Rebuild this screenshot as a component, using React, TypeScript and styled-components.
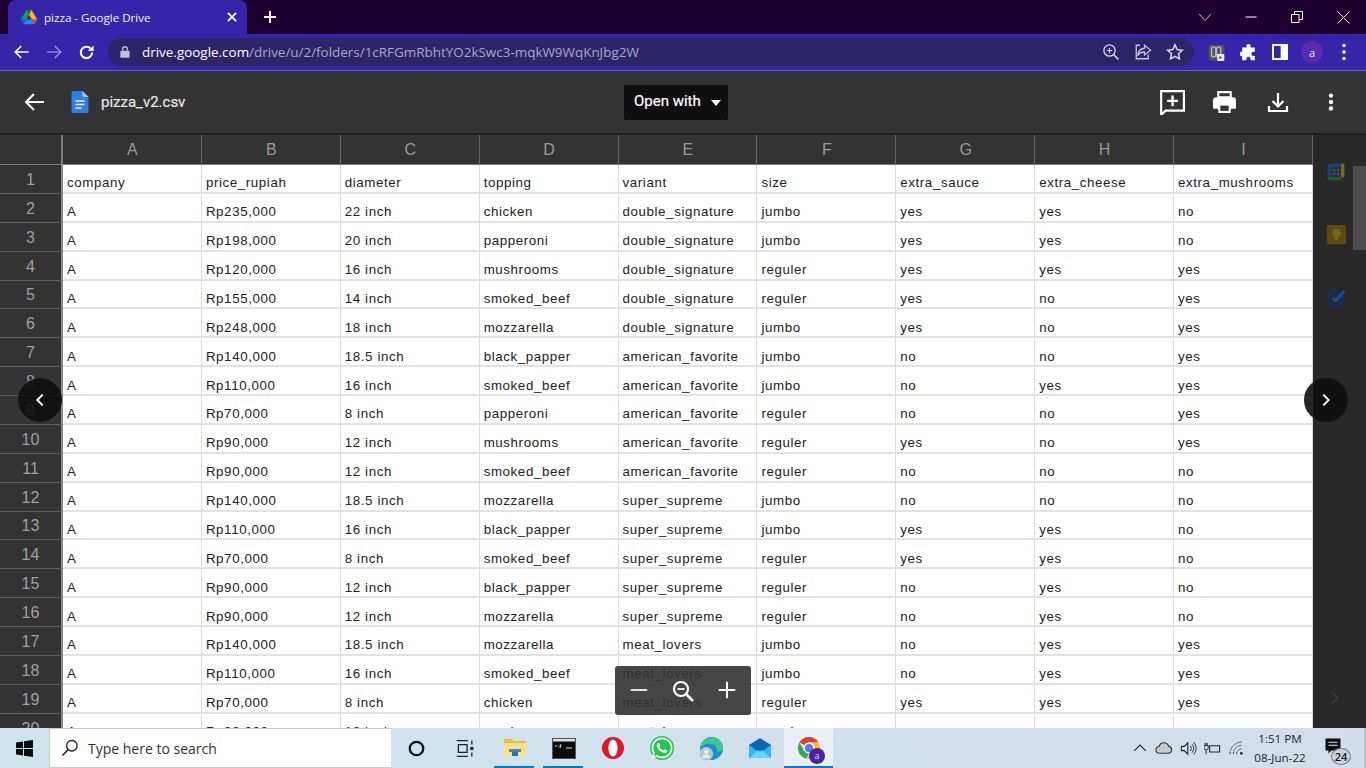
import React from "react";
import styled, { createGlobalStyle } from "styled-components";
import { FaWhatsapp } from "react-icons/fa";

const Global = createGlobalStyle`
  html, body { margin: 0; padding: 0; height: 100%; overflow: hidden; background: #333; }
  * { box-sizing: border-box; }
`;

const Page = styled.div`
  width: 1366px; height: 768px; display: flex; flex-direction: column; overflow: hidden;
  font-family: "Liberation Sans", Arial, sans-serif;
`;
const TabStrip = styled.div`
  height: 34px; flex: none; background: #1f0033; display: flex; align-items: stretch; padding-left: 8px;
`;
const Tab = styled.div`
  width: 239px; background: #3725a9; border-radius: 8px 8px 0 0; display: flex; align-items: center;
  padding: 0 8px 0 13px; color: #f4f2ff; font: 11.6px "Open Sans", sans-serif; 
`;
const TabTitle = styled.span` margin-left: 7px; flex: 1; letter-spacing: 0; `;
const IconBox = styled.span<{ $w: number }>`
  width: ${p => p.$w}px; flex: none; height: 100%; display: flex; align-items: center; justify-content: center; position: relative;
`;
const Spacer = styled.div` flex: 1; `;
const Toolbar = styled.div`
  height: 36px; flex: none; background: #3725a9; display: flex; align-items: center; padding: 0 6px;
`;
const NavSlot = styled.span` width: 32px; height: 32px; display: flex; align-items: center; justify-content: center; position: relative; `;
const Omnibox = styled.div`
  flex: 1; height: 28px; margin: 0 6px; background: #2d2568; border-radius: 14px; display: flex; align-items: center;
  padding: 0 3px 0 10px;
`;
const UrlText = styled.div`
  flex: 1; margin-left: 10px; font: 13.44px "Open Sans", sans-serif; color: #a9a5cc; white-space: nowrap;
`;
const UrlHost = styled.span` color: #ffffff; `;
const Avatar = styled.span`
  width: 22px; height: 22px; border-radius: 50%; background: #5a2bb0; color: #eee; font: 11px "Open Sans", sans-serif;
  display: flex; align-items: center; justify-content: center;
`;
const AccentLine = styled.div` height: 1px; flex: none; background: #6a58cf; `;
const ViewerBar = styled.div`
  height: 62px; flex: none; background: #333333; display: grid; grid-template-columns: 624px 104px 1fr; align-items: center;
`;
const FileGroup = styled.div` display: flex; align-items: center; padding-left: 23px; `;
const DocSlot = styled.span` margin-left: 24px; display: flex; `;
const FileName = styled.span`
  margin-left: 12px; color: #e6e6e6; font: 400 15px Roboto, sans-serif; -webkit-text-stroke: 0.2px #e6e6e6;
`;
const OpenWith = styled.div`
  height: 35px; background: #0f0f0f; border-radius: 2px; color: #fff; font: 400 15px Roboto, sans-serif; -webkit-text-stroke: 0.2px #fff;
  display: flex; align-items: center; padding: 0 0 2px 10px; gap: 10px;
`;
const Caret = styled.span`
  width: 0; height: 0; border-left: 5.5px solid transparent; border-right: 5.5px solid transparent; border-top: 6px solid #fff; margin-top: 4px;
`;
const ViewerActions = styled.div` display: flex; justify-content: flex-end; padding-right: 9px; `;
const ActionSlot = styled.span` width: 53px; height: 32px; display: flex; align-items: center; justify-content: center; `;
const Body = styled.div`
  flex: 1; min-height: 0; position: relative; display: flex; background: #282828; border-top: 2px solid #222;
`;
const Sheet = styled.div`
  width: 1313px; flex: none; overflow: hidden; display: grid;
  grid-template-columns: 63px repeat(9, 138.89px); grid-template-rows: 30px; grid-auto-rows: 28.89px; align-content: start;
`;
const Corner = styled.div`
  background: #333; border-right: 2px solid #7d7d7d; border-bottom: 1px solid #7d7d7d;
`;
const ColHead = styled.div`
  background: #333; border-right: 1px solid #666; border-bottom: 1px solid #7d7d7d; color: #999;
  font-size: 16px; display: flex; align-items: center; justify-content: center; padding: 1px 0 0 1px;
`;
const RowHead = styled.div`
  background: #333; border-right: 2px solid #8a8a8a; border-bottom: 1px solid #5c5c5c; color: #a0a0a0;
  font-size: 16px; display: flex; align-items: center; justify-content: center; padding-top: 2px;
`;
const Cell = styled.div`
  background: #fff; border-right: 1px solid #dcdcdc; border-bottom: 2px solid #e2e2e2; color: #222;
  font-size: 13.33px; letter-spacing: 0.6px; line-height: 15px; padding: 0 0 1.5px 4px; display: flex; align-items: flex-end;
  white-space: nowrap; overflow: hidden;
`;
const SideRail = styled.div`
  flex: 1; position: relative; display: flex; flex-direction: column; align-items: flex-start; padding: 27px 0 0 13px; gap: 42px;
`;
const RailThumb = styled.div`
  position: absolute; top: 31px; right: 0; width: 13px; height: 84px; background: #4e4e4e;
`;
const RailChevron = styled.span` position: absolute; left: 14px; bottom: 22px; display: flex; `;
const RoundNav = styled.div<{ $side: "left" | "right" }>`
  position: absolute; top: 243px; ${p => p.$side}: 18px; width: 44px; height: 44px; border-radius: 50%;
  background: rgba(14, 14, 14, 0.9); display: flex; align-items: center; justify-content: center;
`;
const ZoomPanel = styled.div`
  position: absolute; left: 615px; top: 531px; width: 136px; height: 49px; border-radius: 3px; background: rgba(50, 50, 50, 0.9);
  display: flex; align-items: flex-start; justify-content: space-between; padding: 13px 13px 0 13px;
`;
const Taskbar = styled.div`
  height: 40px; flex: none; display: flex; align-items: stretch;
  background: linear-gradient(90deg, #cde4ec 0%, #d0e3ec 40%, #d0dfea 70%, #d3dde9 100%);
  border-right: 2px solid #b8c6d0;
`;
const StartBtn = styled.div` width: 49px; display: flex; align-items: center; justify-content: center; `;
const SearchBox = styled.div`
  width: 343px; background: #fff; border: 1px solid #c4ccd2; border-right: 1px solid #dde; display: flex; align-items: center; padding-left: 11px;
`;
const SearchText = styled.span` margin-left: 9px; color: #333; font: 14px "Open Sans", sans-serif; `;
const TaskSlot = styled.div<{ $on?: boolean; $hot?: boolean }>`
  width: 49px; position: relative; display: flex; align-items: center; justify-content: center;
  background: ${p => (p.$hot ? "#e8eff5" : "transparent")};
  &::after {
    content: ""; display: ${p => (p.$on ? "block" : "none")}; position: absolute; bottom: 0;
    left: ${p => (p.$hot ? "0" : "4px")}; right: ${p => (p.$hot ? "0" : "5px")}; height: 2px; background: #0078d4;
  }
`;
const Tray = styled.div` margin-left: auto; display: flex; align-items: center; padding-right: 11px; `;
const TraySlot = styled.span` width: 24px; display: flex; align-items: center; justify-content: center; `;
const Clock = styled.div`
  width: 62px; margin-left: 1px; text-align: center; color: #222; font: 11.6px/19px "Open Sans", sans-serif;
`;
const NotifySlot = styled.span`
  width: 40px; margin-left: 2px; position: relative; display: flex; justify-content: center; align-items: center; height: 100%; padding-bottom: 4px;
`;
const NotifyBadge = styled.span`
  position: absolute; left: 18px; top: 20px; width: 20px; height: 17px; border-radius: 50%; background: #c9d3da; border: 1px solid #777;
  font: 600 11px/15px "Open Sans", sans-serif; color: #111; text-align: center;
`;
const TileAvatar = styled.span`
  position: absolute; left: 25px; top: 20px; width: 16px; height: 16px; border-radius: 50%; background: #4a21a8; color: #ddd;
  font: 9px/16px "Open Sans", sans-serif; text-align: center;
`;
const WaDisk = styled.span`
  width: 24px; height: 24px; border-radius: 50%; background: #25c650; display: flex; align-items: center; justify-content: center; color: #fff;
`;

const S = ({ w, h = w, vb = "0 0 24 24", children }: { w: number; h?: number; vb?: string; children: React.ReactNode }) => (
  <svg width={w} height={h} viewBox={vb} fill="none" style={{ display: "block" }}>{children}</svg>
);
const Arrow = ({ c = "#fff", size = 20, flip = false, sw = 2.2 }: { c?: string; size?: number; flip?: boolean; sw?: number }) => (
  <S w={size}>
    <path d={flip ? "M3 12h18M13 4l8 8-8 8" : "M21 12H3M11 4l-8 8 8 8"} stroke={c} strokeWidth={sw} />
  </S>
);
const Chevron = ({ dir, c = "#fff", size = 16, sw = 3 }: { dir: "l" | "r"; c?: string; size?: number; sw?: number }) => (
  <S w={size}><path d={dir === "l" ? "M16 4l-8 8 8 8" : "M8 4l8 8-8 8"} stroke={c} strokeWidth={sw} /></S>
);
const Dots = ({ c = "#fff", r = 2 }: { c?: string; r?: number }) => (
  <S w={22}><circle cx="12" cy="5" r={r} fill={c} /><circle cx="12" cy="12" r={r} fill={c} /><circle cx="12" cy="19" r={r} fill={c} /></S>
);

const DriveLogo = () => (
  <S w={16} vb="0 0 87.3 78">
    <path d="m6.6 66.85 3.85 6.65c.8 1.4 1.95 2.5 3.3 3.3l13.75-23.8h-27.5c0 1.55.4 3.1 1.2 4.5z" fill="#0066da" />
    <path d="m43.65 25-13.75-23.8c-1.35.8-2.5 1.9-3.3 3.3l-25.4 44a9.06 9.06 0 0 0 -1.2 4.5h27.5z" fill="#00ac47" />
    <path d="m73.55 76.8c1.35-.8 2.5-1.9 3.3-3.3l1.6-2.75 7.65-13.25c.8-1.4 1.2-2.95 1.2-4.5h-27.502l5.852 11.5z" fill="#ea4335" />
    <path d="m43.65 25 13.75-23.8c-1.35-.8-2.9-1.2-4.5-1.2h-18.5c-1.6 0-3.15.45-4.5 1.2z" fill="#00832d" />
    <path d="m59.8 53h-32.3l-13.75 23.8c1.35.8 2.9 1.2 4.5 1.2h50.8c1.6 0 3.15-.45 4.5-1.2z" fill="#2684fc" />
    <path d="m73.4 26.5-12.7-22c-.8-1.4-1.95-2.5-3.3-3.3l-13.75 23.8 16.15 28h27.45c0-1.55-.4-3.1-1.2-4.5z" fill="#ffba00" />
  </S>
);
const DocIcon = () => (
  <S w={18} h={22} vb="0 0 18 22">
    <path d="M2 0h9l6 6v14a2 2 0 0 1-2 2H2a2 2 0 0 1-2-2V2a2 2 0 0 1 2-2z" fill="#2f7de9" transform="translate(.5 0)" />
    <path d="M11.5 0l6 6h-4.5a1.5 1.5 0 0 1-1.5-1.5z" fill="#9cc2f7" />
    <path d="M4.5 10h9M4.5 13.5h9M4.5 17h6" stroke="#e8f0fe" strokeWidth="1.6" />
  </S>
);
const CalIcon = () => (
  <S w={20}>
    <rect x="2" y="2" width="20" height="20" rx="1" fill="#2a2d38" />
    <path d="M2 2h16v4H6v12H2z" fill="#1c3f77" />
    <path d="M18 2h4v16h-4z" fill="#7d6a12" />
    <path d="M2 18h16v4H4a2 2 0 0 1-2-2z" fill="#1d5d30" />
    <path d="M18 18h4l-4 4z" fill="#6e221c" />
    <text x="12" y="16" fontSize="10" fontFamily="Liberation Sans" fill="#3c5f94" textAnchor="middle">31</text>
  </S>
);
const KeepIcon = () => (
  <S w={21}>
    <rect x="1" y="1" width="22" height="22" rx="2" fill="#5c4b0c" />
    <circle cx="12" cy="10.5" r="5" fill="#77651c" />
    <rect x="10" y="15" width="4" height="3.5" fill="#77651c" />
  </S>
);
const TasksIcon = () => (
  <S w={21}>
    <circle cx="11" cy="13" r="8" stroke="#14305e" strokeWidth="3.4" />
    <path d="M7.5 12l3.5 3.5L21 5" stroke="#1b4a96" strokeWidth="3.4" />
  </S>
);
const WinIcon = () => (
  <S w={17} vb="0 0 17 17">
    <path d="M0 2.4L7 1.4V8H0zM8 1.2L17 0v8H8zM0 9h7v6.6L0 14.6zM8 9h9v8l-9-1.2z" fill="#0d0d0d" />
  </S>
);
const Cmd = () => (
  <S w={24} h={21} vb="0 0 24 21">
    <rect x=".5" y=".5" width="23" height="20" fill="#0b0b0b" stroke="#555" />
    <rect x="1" y="1" width="22" height="2.5" fill="#ddd" />
    <path d="M3 8h2M6.5 8h1M9 6l-1 4M14 10h6" stroke="#ddd" strokeWidth="1" />
  </S>
);
const Folder = () => (
  <S w={24} h={24}>
    <path d="M1 3h8l2 2h12v15H1z" fill="#f2bc3a" />
    <path d="M1 7h22v13H1z" fill="#ffdf7e" />
    <path d="M6 13h12v3H6z" fill="#2f8fd8" />
    <path d="M9 16h6v4H9z" fill="#1f70b8" />
  </S>
);
const Opera = () => (
  <S w={24}>
    <circle cx="12" cy="12" r="11" fill="#e5122a" />
    <ellipse cx="12" cy="12" rx="4.6" ry="8.6" fill="#fff" />
  </S>
);
const Edge = () => (
  <S w={25}>
    <circle cx="13" cy="12" r="11" fill="#1a8fd8" />
    <path d="M2 12C3 4 10 .5 16 1.5c5 1 8 5 8 10 0 3-3 4-6 3.5 1-3-1-7-5-7.5C8 7 3.500 9 2 12z" fill="#3cc98a" />
    <circle cx="8" cy="17" r="6.500" fill="#bcc4ca" />
    <circle cx="8" cy="15" r="2.200" fill="#e9ecee" />
    <path d="M3.800 21c.6-2.600 2.400-3.600 4.200-3.600s3.600 1 4.200 3.600z" fill="#e9ecee" />
  </S>
);
const Mail = () => (
  <S w={24}>
    <path d="M1 9l11-7 11 7v13H1z" fill="#0a64b8" />
    <path d="M1 9l11 8 11-8v13H1z" fill="#31b5f2" />
    <path d="M1 22l9-8 2 1.500 2-1.500 9 8z" fill="#64d2fa" />
  </S>
);
const ChromeLogo = () => (
  <S w={24}>
    <path d="M12 1a11 11 0 0 1 9.530 5.500H12a5.500 5.500 0 0 0-4.760 2.750L2.470 6.500A11 11 0 0 1 12 1z" fill="#e33b2e" />
    <path d="M2.470 6.500l4.770 8.250A5.500 5.500 0 0 0 12 17.500l-2.700 5.160A11 11 0 0 1 2.470 6.500z" fill="#2da94f" />
    <path d="M21.530 6.500A11 11 0 0 1 12 23l-2.700-.34 7.460-7.910A5.500 5.500 0 0 0 12 6.500z" fill="#fbc116" />
    <circle cx="12" cy="12" r="5.500" fill="#fff" />
    <circle cx="12" cy="12" r="4.200" fill="#3f86f0" />
  </S>
);

const letters = ["A", "B", "C", "D", "E", "F", "G", "H", "I"];
const raw = `company|price_rupiah|diameter|topping|variant|size|extra_sauce|extra_cheese|extra_mushrooms
A|Rp235,000|22 inch|chicken|double_signature|jumbo|yes|yes|no
A|Rp198,000|20 inch|papperoni|double_signature|jumbo|yes|yes|no
A|Rp120,000|16 inch|mushrooms|double_signature|reguler|yes|yes|yes
A|Rp155,000|14 inch|smoked_beef|double_signature|reguler|yes|no|yes
A|Rp248,000|18 inch|mozzarella|double_signature|jumbo|yes|no|yes
A|Rp140,000|18.5 inch|black_papper|american_favorite|jumbo|no|no|yes
A|Rp110,000|16 inch|smoked_beef|american_favorite|jumbo|no|yes|yes
A|Rp70,000|8 inch|papperoni|american_favorite|reguler|no|no|yes
A|Rp90,000|12 inch|mushrooms|american_favorite|reguler|yes|no|yes
A|Rp90,000|12 inch|smoked_beef|american_favorite|reguler|no|no|no
A|Rp140,000|18.5 inch|mozzarella|super_supreme|jumbo|no|no|no
A|Rp110,000|16 inch|black_papper|super_supreme|jumbo|yes|yes|no
A|Rp70,000|8 inch|smoked_beef|super_supreme|reguler|yes|yes|no
A|Rp90,000|12 inch|black_papper|super_supreme|reguler|no|yes|no
A|Rp90,000|12 inch|mozzarella|super_supreme|reguler|no|yes|no
A|Rp140,000|18.5 inch|mozzarella|meat_lovers|jumbo|no|yes|yes
A|Rp110,000|16 inch|smoked_beef|meat_lovers|jumbo|no|yes|yes
A|Rp70,000|8 inch|chicken|meat_lovers|reguler|yes|yes|yes
A|Rp90,000|12 inch|mushrooms|meat_lovers|reguler|no|yes|yes`;
const rows = raw.split("\n").map(r => r.split("|"));

export default function App() {
  return (
    <Page>
      <Global />
      <TabStrip>
        <Tab>
          <DriveLogo />
          <TabTitle>pizza - Google Drive</TabTitle>
          <S w={14}><path d="M5 5l14 14M19 5L5 19" stroke="#fff" strokeWidth="3" /></S>
        </Tab>
        <IconBox $w={46}>
          <S w={16}><path d="M12 3v18M3 12h18" stroke="#fff" strokeWidth="3" /></S>
        </IconBox>
        <Spacer />
        <IconBox $w={46}><S w={14}><path d="M2 7l10 11L22 7" stroke="#ccc" strokeWidth="1.500" /></S></IconBox>
        <IconBox $w={46}><S w={12}><path d="M1 12h22" stroke="#fff" strokeWidth="2" /></S></IconBox>
        <IconBox $w={46}>
          <S w={12}><path d="M1 7h15v16H1zM7 7V1h16v16h-7" stroke="#fff" strokeWidth="2" /></S>
        </IconBox>
        <IconBox $w={46}><S w={13}><path d="M1 1l22 22M23 1L1 23" stroke="#fff" strokeWidth="1.800" /></S></IconBox>
      </TabStrip>
      <Toolbar>
        <NavSlot><Arrow size={18} /></NavSlot>
        <NavSlot><Arrow size={18} flip c="#8f85d6" /></NavSlot>
        <NavSlot>
          <S w={17}>
            <path d="M20 12a8 8 0 1 1-2.300-5.700" stroke="#fff" strokeWidth="3" />
            <path d="M22 2v8h-8z" fill="#fff" />
          </S>
        </NavSlot>
        <Omnibox>
          <S w={14}>
            <rect x="4" y="10" width="16" height="12" rx="1.500" fill="#c0bdd8" />
            <path d="M8 10V7a4 4 0 0 1 8 0v3" stroke="#c0bdd8" strokeWidth="2.200" />
          </S>
          <UrlText><UrlHost>drive.google.com</UrlHost>/drive/u/2/folders/1cRFGmRbhtYO2kSwc3-mqkW9WqKnJbg2W</UrlText>
          <NavSlot>
            <S w={18}>
              <circle cx="10" cy="10" r="7.500" stroke="#d8d6e8" strokeWidth="1.800" />
              <path d="M15.500 15.500L22 22" stroke="#d8d6e8" strokeWidth="2" />
              <path d="M10 6.500v7M6.500 10h7" stroke="#d8d6e8" strokeWidth="1.600" />
            </S>
          </NavSlot>
          <NavSlot>
            <S w={18}>
              <path d="M8 3H3v18h16v-6" stroke="#c8c5de" strokeWidth="1.700" />
              <path d="M14 3l8 6.500-8 6.500v-4c-4 0-7 1-9 5 .3-6 3.500-9.500 9-10z" stroke="#c8c5de" strokeWidth="1.700" />
            </S>
          </NavSlot>
          <NavSlot>
            <S w={18}>
              <path d="M12 2.500l2.900 6.300 6.800.8-5 4.700 1.300 6.800-6-3.400-6 3.400 1.300-6.800-5-4.700 6.800-.8z" stroke="#dcdaea" strokeWidth="2" />
            </S>
          </NavSlot>
        </Omnibox>
        <NavSlot>
          <S w={17}>
            <rect x="1" y="1" width="22" height="22" rx="3" fill="#545454" />
            <path d="M5 7a3 3 0 0 1 6 0v8a3 3 0 0 1-6 0zM12 7a3 3 0 0 1 6 0v8a3 3 0 0 1-6 0z" stroke="#bbb" strokeWidth="2" />
            <rect x="13" y="14" width="10" height="10" rx="1" fill="#eee" />
            <path d="M16 16.500l4 2.500-4 2.500z" fill="#555" />
          </S>
        </NavSlot>
        <NavSlot>
          <S w={17}>
            <path d="M9 3a3 3 0 0 1 6 0v2h6v6h-2a3 3 0 0 0 0 6h2v6h-6v-2a3 3 0 0 0-6 0v2H3v-6H1a4 4 0 0 1 0-6h2V5h6z" fill="#fff" />
          </S>
        </NavSlot>
        <NavSlot>
          <S w={16}>
            <rect x="1.500" y="1.500" width="21" height="21" stroke="#fff" strokeWidth="3" />
            <rect x="13" y="2" width="10" height="20" fill="#fff" />
          </S>
        </NavSlot>
        <NavSlot><Avatar>a</Avatar></NavSlot>
        <NavSlot><Dots r={1.900} /></NavSlot>
      </Toolbar>
      <AccentLine />
      <ViewerBar>
        <FileGroup>
          <Arrow size={24} sw={2} />
          <DocSlot><DocIcon /></DocSlot>
          <FileName>pizza_v2.csv</FileName>
        </FileGroup>
        <OpenWith>Open with<Caret /></OpenWith>
        <ViewerActions>
          <ActionSlot>
            <S w={26}>
              <path d="M2 2h21v18H6l-4 4z" stroke="#fff" strokeWidth="2" />
              <path d="M12.500 6v10M7.500 11h10" stroke="#fff" strokeWidth="2.200" />
            </S>
          </ActionSlot>
          <ActionSlot>
            <S w={25}>
              <path d="M6 2h12v5H6z" stroke="#fff" strokeWidth="2" />
              <path d="M4 7h16a3 3 0 0 1 3 3v8h-5v4H6v-4H1v-8a3 3 0 0 1 3-3z" fill="#fff" />
              <rect x="8" y="15" width="8" height="5" fill="#333" />
            </S>
          </ActionSlot>
          <ActionSlot>
            <S w={24}>
              <path d="M12 3v13M6.500 11l5.500 5.500 5.500-5.500" stroke="#fff" strokeWidth="2.200" />
              <path d="M3 16v5h18v-5" stroke="#fff" strokeWidth="2.200" />
            </S>
          </ActionSlot>
          <ActionSlot><Dots r={2.400} /></ActionSlot>
        </ViewerActions>
      </ViewerBar>
      <Body>
        <Sheet>
          <Corner />
          {letters.map(l => <ColHead key={l}>{l}</ColHead>)}
          {rows.map((row, i) => (
            <React.Fragment key={i}>
              <RowHead>{i + 1}</RowHead>
              {row.map((v, j) => <Cell key={j}>{v}</Cell>)}
            </React.Fragment>
          ))}
        </Sheet>
        <SideRail>
          <CalIcon />
          <KeepIcon />
          <TasksIcon />
          <RailThumb />
          <RailChevron><Chevron dir="r" c="#3e3e3e" size={16} sw={2} /></RailChevron>
        </SideRail>
        <RoundNav $side="left"><Chevron dir="l" /></RoundNav>
        <RoundNav $side="right"><Chevron dir="r" /></RoundNav>
        <ZoomPanel>
          <S w={22}><path d="M3 12h18" stroke="#eee" strokeWidth="2" /></S>
          <S w={24}>
            <circle cx="10" cy="10" r="7" stroke="#fff" strokeWidth="2.200" />
            <path d="M15 15l7 7" stroke="#fff" strokeWidth="2.600" />
            <path d="M6.500 10h7" stroke="#fff" strokeWidth="1.800" />
          </S>
          <S w={22}><path d="M12 3v18M3 12h18" stroke="#fff" strokeWidth="2.200" /></S>
        </ZoomPanel>
      </Body>
      <Taskbar>
        <StartBtn><WinIcon /></StartBtn>
        <SearchBox>
          <S w={18}>
            <circle cx="14.500" cy="9" r="7" stroke="#222" strokeWidth="1.800" />
            <path d="M9.500 14L2 22" stroke="#222" strokeWidth="2" />
          </S>
          <SearchText>Type here to search</SearchText>
        </SearchBox>
        <TaskSlot>
          <S w={17}><circle cx="12" cy="12" r="9.500" stroke="#111" strokeWidth="3.200" /></S>
        </TaskSlot>
        <TaskSlot>
          <S w={19}>
            <path d="M1 2h14M1 22h14M3 7h11v10H3z" stroke="#222" strokeWidth="1.600" />
            <path d="M20 2v5M20 17v5" stroke="#222" strokeWidth="1.600" />
            <rect x="18" y="10" width="4" height="4" fill="#222" />
          </S>
        </TaskSlot>
        <TaskSlot $on><Folder /></TaskSlot>
        <TaskSlot $on><Cmd /></TaskSlot>
        <TaskSlot><Opera /></TaskSlot>
        <TaskSlot><WaDisk><FaWhatsapp size={24} /></WaDisk></TaskSlot>
        <TaskSlot><Edge /></TaskSlot>
        <TaskSlot><Mail /></TaskSlot>
        <TaskSlot $on $hot>
          <ChromeLogo />
          <TileAvatar>a</TileAvatar>
        </TaskSlot>
        <Tray>
          <TraySlot><S w={14}><path d="M2 17L12 7l10 10" stroke="#222" strokeWidth="2" /></S></TraySlot>
          <TraySlot>
            <S w={18}>
              <path d="M6 19a4.500 4.500 0 0 1-.5-9A6.500 6.500 0 0 1 18 9.500a4.800 4.800 0 0 1 0 9.500z" fill="#c8ccd0" stroke="#333" strokeWidth="1.500" />
            </S>
          </TraySlot>
          <TraySlot>
            <S w={17}>
              <path d="M2 9h4l5-5v16l-5-5H2z" stroke="#222" strokeWidth="1.500" />
              <path d="M14.500 8.500a5 5 0 0 1 0 7M17 6a9 9 0 0 1 0 12M19.500 3.500a12.500 12.500 0 0 1 0 17" stroke="#222" strokeWidth="1.300" />
            </S>
          </TraySlot>
          <TraySlot>
            <S w={17}>
              <path d="M8 8h14v9H8z" stroke="#222" strokeWidth="1.500" />
              <path d="M0 8h6v3a3 3 0 0 1-6 0zM3 4v4M1.500 4v4M4.500 4v4M3 14v6" stroke="#222" strokeWidth="1.300" />
            </S>
          </TraySlot>
          <TraySlot>
            <S w={16}>
              <path d="M3 21a18 18 0 0 1 18-18M8 21A13 13 0 0 1 21 8M13 21a8 8 0 0 1 8-8" stroke="#444" strokeWidth="1.500" strokeDasharray="3 1" />
              <circle cx="20" cy="20" r="2" fill="#222" />
            </S>
          </TraySlot>
          <Clock>1:51 PM<br />08-Jun-22</Clock>
          <NotifySlot>
            <S w={18}><path d="M2 2h20v16H10l-4 4v-4H2z" fill="#0d0d0d" /><path d="M6 7h12M6 11h12" stroke="#e5ecf0" strokeWidth="1.500" /></S>
            <NotifyBadge>24</NotifyBadge>
          </NotifySlot>
        </Tray>
      </Taskbar>
    </Page>
  );
}
